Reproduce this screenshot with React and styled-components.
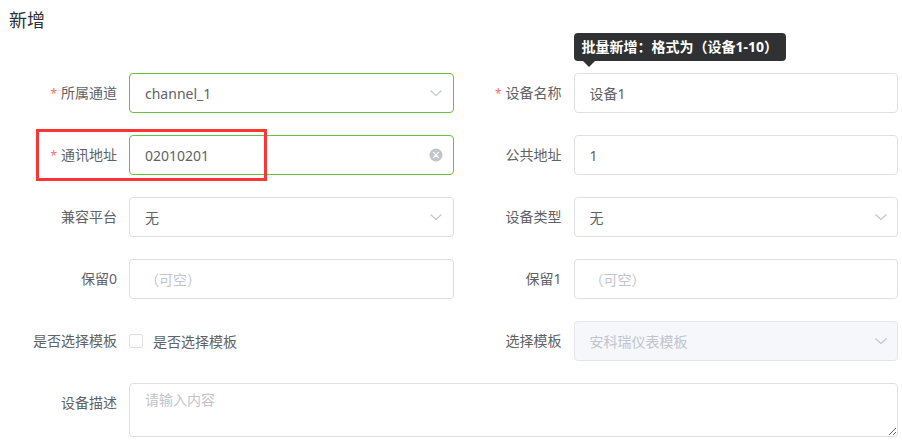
import React from 'react';
import styled, { createGlobalStyle } from 'styled-components';

const Global = createGlobalStyle`
	body {
		margin: 0;
		background: #fff;
		font-family: "Noto Sans", "Noto Sans CJK SC", sans-serif;
	}
`;

const S = {
	Page: styled.div`
		padding: 8px 4px 0 9px;
	`,
	Title: styled.div`
		font-size: 18px;
		line-height: 24px;
		color: #303133;
		margin-bottom: 41px;
	`,
	Form: styled.div`
		display: grid;
		grid-template-columns: 1fr 1fr;
		row-gap: 22px;
	`,
	Item: styled.div`
		position: relative;
		display: flex;
		align-items: flex-start;
		grid-column: ${(props) => (props.$wide ? '1 / 3' : 'auto')};
	`,
	Label: styled.label`
		flex: 0 0 120px;
		height: 40px;
		box-sizing: border-box;
		padding-right: 12px;
		text-align: right;
		font-size: 14px;
		line-height: 40px;
		color: #606266;
		&::before {
			content: ${(props) => (props.$required ? "'*'" : 'none')};
			color: #f56c6c;
			font-size: 12px;
			line-height: 1;
			margin-right: 4px;
		}
	`,
	Content: styled.div`
		position: relative;
		flex: 1;
		min-width: 0;
		display: flex;
		align-items: center;
		min-height: 40px;
	`,
	Input: styled.input`
		box-sizing: border-box;
		width: 100%;
		height: 40px;
		padding: 0 30px 0 15px;
		border: 1px solid ${(props) => (props.$ok ? '#67c23a' : props.disabled ? '#e4e7ed' : '#dcdfe6')};
		border-radius: 4px;
		background: ${(props) => (props.disabled ? '#f5f7fa' : '#fff')};
		font-family: inherit;
		font-size: 14px;
		color: ${(props) => (props.disabled ? '#c0c4cc' : '#606266')};
		outline: none;
		-webkit-text-fill-color: ${(props) => (props.disabled ? '#c0c4cc' : '#606266')};
		&::placeholder {
			color: #c0c4cc;
			-webkit-text-fill-color: #c0c4cc;
		}
	`,
	Suffix: styled.span`
		position: absolute;
		right: 5px;
		top: 0;
		width: 25px;
		height: 40px;
		display: flex;
		align-items: center;
		justify-content: center;
		pointer-events: none;
	`,
	Tooltip: styled.div`
		position: absolute;
		left: 0;
		bottom: calc(100% + 12px);
		padding: 6px 8px;
		border-radius: 4px;
		background: #303133;
		color: #fff;
		font-size: 14px;
		font-weight: bold;
		line-height: 16px;
		white-space: nowrap;
		&::after {
			content: '';
			position: absolute;
			left: 9px;
			top: 100%;
			border: 6px solid transparent;
			border-top-color: #303133;
			border-bottom-width: 0;
		}
	`,
	Mark: styled.div`
		position: absolute;
		left: 27px;
		top: -6px;
		width: 231px;
		height: 52px;
		box-sizing: border-box;
		border: 3px solid #ff3434;
		pointer-events: none;
	`,
	CheckLabel: styled.label`
		display: flex;
		align-items: center;
		gap: 10px;
		font-size: 14px;
		color: #606266;
	`,
	CheckBox: styled.span`
		width: 14px;
		height: 14px;
		box-sizing: border-box;
		border: 1px solid #dcdfe6;
		border-radius: 2px;
		background: #fff;
	`,
	TextArea: styled.textarea`
		box-sizing: border-box;
		width: 100%;
		height: 54px;
		padding: 5px 15px;
		border: 1px solid #dcdfe6;
		border-radius: 4px;
		font-family: inherit;
		font-size: 14px;
		line-height: 1.5;
		color: #606266;
		resize: vertical;
		outline: none;
		&::placeholder {
			color: #c0c4cc;
		}
	`
};

const Arrow = () => (
	<svg width="14" height="14" viewBox="0 0 14 14">
		<polyline points="1.5,4.5 7,9.5 12.5,4.5" fill="none" stroke="#c0c4cc" strokeWidth="1.1" />
	</svg>
);

const Clear = () => (
	<svg width="14" height="14" viewBox="0 0 14 14">
		<circle cx="7" cy="7" r="6.5" fill="#c0c4cc" />
		<path d="M4.6 4.6 L9.4 9.4 M9.4 4.6 L4.6 9.4" stroke="#fff" strokeWidth="1.4" strokeLinecap="round" />
	</svg>
);

const Field = ({ label, required, value, placeholder, ok, disabled, suffix, children }) => (
	<S.Item>
		<S.Label $required={required}>{label}</S.Label>
		<S.Content>
			<S.Input readOnly defaultValue={value} placeholder={placeholder} $ok={ok} disabled={disabled} />
			{suffix && <S.Suffix>{suffix}</S.Suffix>}
			{children}
		</S.Content>
	</S.Item>
);

const App = () => (
	<S.Page>
		<Global />
		<S.Title>新增</S.Title>
		<S.Form>
			<Field label="所属通道" required value="channel_1" ok suffix={<Arrow />} />
			<Field label="设备名称" required value="设备1">
				<S.Tooltip>批量新增：格式为（设备1-10）</S.Tooltip>
			</Field>
			<S.Item>
				<S.Label $required>通讯地址</S.Label>
				<S.Content>
					<S.Input readOnly defaultValue="02010201" $ok />
					<S.Suffix>
						<Clear />
					</S.Suffix>
				</S.Content>
				<S.Mark />
			</S.Item>
			<Field label="公共地址" value="1" />
			<Field label="兼容平台" value="无" suffix={<Arrow />} />
			<Field label="设备类型" value="无" suffix={<Arrow />} />
			<Field label="保留0" placeholder="（可空）" />
			<Field label="保留1" placeholder="（可空）" />
			<S.Item>
				<S.Label>是否选择模板</S.Label>
				<S.Content>
					<S.CheckLabel>
						<S.CheckBox />
						是否选择模板
					</S.CheckLabel>
				</S.Content>
			</S.Item>
			<Field label="选择模板" value="安科瑞仪表模板" disabled suffix={<Arrow />} />
			<S.Item $wide>
				<S.Label>设备描述</S.Label>
				<S.Content>
					<S.TextArea placeholder="请输入内容" />
				</S.Content>
			</S.Item>
		</S.Form>
	</S.Page>
);

export default App;
